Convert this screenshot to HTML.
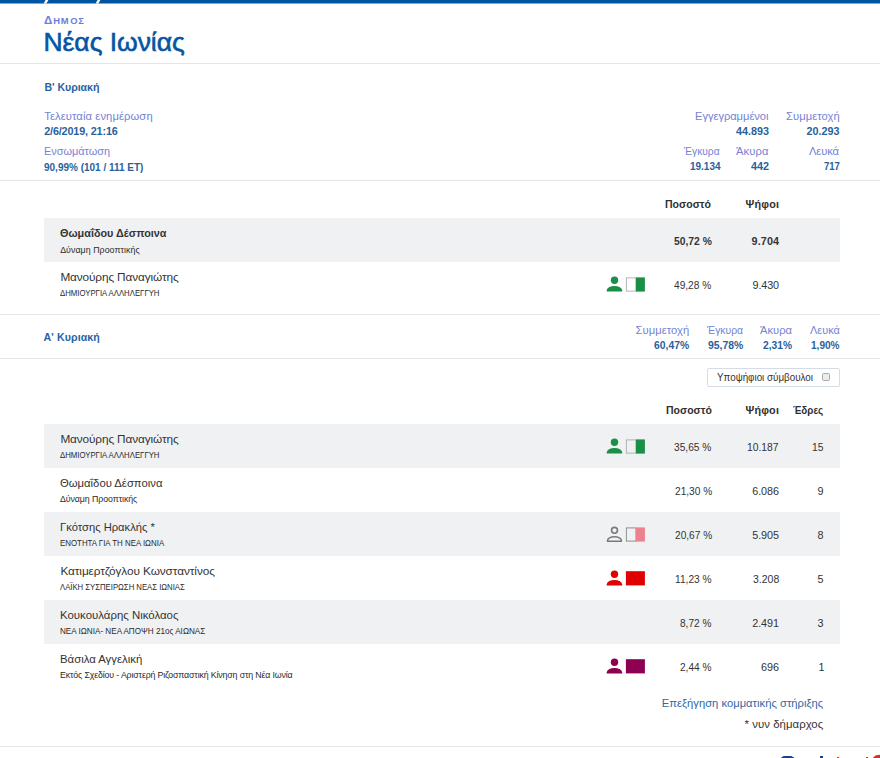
<!DOCTYPE html>
<html><head><meta charset="utf-8">
<style>
html,body{margin:0;padding:0;background:#fff;width:880px;height:758px;overflow:hidden;position:relative}
body{font-family:"Liberation Sans",sans-serif;}
.a{position:absolute;white-space:nowrap;line-height:1}
.hr{position:absolute;left:0;width:880px;height:1px;background:#e3e6ea}
.grey{position:absolute;left:44px;width:796px;height:44px;background:#f0f1f3}
.ic{position:absolute;overflow:visible}
</style></head><body>
<svg style="position:absolute;left:0;top:0" width="880" height="5">
<rect x="0" y="0" width="880" height="3.5" fill="#0055a2"/>
<polygon points="45.6,0 48.4,0 46.4,3.5 43.6,3.5" fill="#fff"/>
<polygon points="97.6,0 100.4,0 98.4,3.5 95.6,3.5" fill="#fff"/>
</svg>
<div class="hr" style="top:63px"></div>
<div class="hr" style="top:180px"></div>
<div class="hr" style="top:314px"></div>
<div class="hr" style="top:358px"></div>
<div class="hr" style="top:746px"></div>
<div class="grey" style="top:218px"></div>
<div class="grey" style="top:424px"></div>
<div class="grey" style="top:512px"></div>
<div class="grey" style="top:600px"></div>
<svg class="ic" style="left:600px;top:272px" width="50" height="26" viewBox="0 0 50 26"><circle cx="14.5" cy="8.2" r="3.7" fill="#1a8f47"/><path d="M6.7 19.6 L6.7 18.6 A7.75 4.7 0 0 1 22.2 18.6 L22.2 19.6 Z" fill="#1a8f47"/><rect x="26.4" y="5.9" width="9.6" height="13.2" fill="none" stroke="#b3b3b3" stroke-width="1"/><rect x="35.9" y="5.4" width="9.0" height="14.2" fill="#1a8f47"/></svg>
<svg class="ic" style="left:600px;top:434px" width="50" height="26" viewBox="0 0 50 26"><circle cx="14.5" cy="8.2" r="3.7" fill="#1a8f47"/><path d="M6.7 19.6 L6.7 18.6 A7.75 4.7 0 0 1 22.2 18.6 L22.2 19.6 Z" fill="#1a8f47"/><rect x="26.4" y="5.9" width="9.6" height="13.2" fill="none" stroke="#b3b3b3" stroke-width="1"/><rect x="35.9" y="5.4" width="9.0" height="14.2" fill="#1a8f47"/></svg>
<svg class="ic" style="left:600px;top:522px" width="50" height="26" viewBox="0 0 50 26"><circle cx="14.5" cy="8.3" r="2.95" fill="none" stroke="#7a7a7a" stroke-width="1.6"/><path d="M7.5 19.3 L7.5 18.7 A6.95 3.95 0 0 1 21.4 18.7 L21.4 19.3 Z" fill="none" stroke="#7a7a7a" stroke-width="1.6" stroke-linejoin="round"/><rect x="26.4" y="5.9" width="9.6" height="13.2" fill="none" stroke="#8f8f8f" stroke-width="1"/><rect x="35.9" y="5.4" width="9.0" height="14.2" fill="#ee8090"/></svg>
<svg class="ic" style="left:600px;top:566px" width="50" height="26" viewBox="0 0 50 26"><circle cx="14.5" cy="8.2" r="3.7" fill="#e00000"/><path d="M6.7 19.6 L6.7 18.6 A7.75 4.7 0 0 1 22.2 18.6 L22.2 19.6 Z" fill="#e00000"/><rect x="25.9" y="5.2" width="19.0" height="14.2" fill="#e00000"/></svg>
<svg class="ic" style="left:600px;top:654px" width="50" height="26" viewBox="0 0 50 26"><circle cx="14.5" cy="8.2" r="3.7" fill="#8e0052"/><path d="M6.7 19.6 L6.7 18.6 A7.75 4.7 0 0 1 22.2 18.6 L22.2 19.6 Z" fill="#8e0052"/><rect x="25.9" y="5.2" width="19.0" height="14.2" fill="#8e0052"/></svg>
<div style="position:absolute;left:707px;top:368px;width:133px;height:19px;box-sizing:border-box;border:1px solid #d5dce5;border-radius:2px"></div>
<div style="position:absolute;left:821.5px;top:373px;width:8px;height:8px;box-sizing:border-box;border:1px solid #a9a9a9;border-radius:1.5px;background:#ececec"></div>
<div class="a" style="left:44.00px;top:15px;font-size:11.5px;font-weight:700;color:#6a7ede;letter-spacing:0.000px">Δ</div>
<div class="a" style="left:53.25px;top:16px;font-size:9.4px;font-weight:700;color:#6a7ede;letter-spacing:0.000px">Η</div>
<div class="a" style="left:60.75px;top:16px;font-size:9.4px;font-weight:700;color:#6a7ede;letter-spacing:0.000px">Μ</div>
<div class="a" style="left:70.25px;top:16px;font-size:9.4px;font-weight:700;color:#6a7ede;letter-spacing:0.000px">Ο</div>
<div class="a" style="left:78.25px;top:16px;font-size:9.4px;font-weight:700;color:#6a7ede;letter-spacing:0.000px">Σ</div>
<div class="a" style="left:43.50px;top:29px;font-size:26.5px;font-weight:400;color:#0655a5;letter-spacing:-0.042px;-webkit-text-stroke:0.6px #0655a5">Νέας Ιωνίας</div>
<div class="a" style="left:44.40px;top:82px;font-size:10.6px;font-weight:700;color:#2862a2;letter-spacing:-0.038px">Β' Κυριακή</div>
<div class="a" style="left:44.20px;top:111px;font-size:11.2px;font-weight:400;color:#7483d6;letter-spacing:0.104px">Τελευταία ενημέρωση</div>
<div class="a" style="left:44.20px;top:126px;font-size:10.8px;font-weight:700;color:#2a5f9c;letter-spacing:-0.145px">2/6/2019, 21:16</div>
<div class="a" style="left:44.20px;top:146px;font-size:11.2px;font-weight:400;color:#7483d6;transform:scaleX(0.9762);transform-origin:0 0">Ενσωμάτωση</div>
<div class="a" style="left:44.20px;top:162px;font-size:10.8px;font-weight:700;color:#2a5f9c;transform:scaleX(0.9245);transform-origin:0 0">90,99% (101 / 111 ET)</div>
<div class="a" style="left:695.00px;top:111px;font-size:11.2px;font-weight:400;color:#7483d6;letter-spacing:-0.063px">Εγγεγραμμένοι</div>
<div class="a" style="left:736.10px;top:126px;font-size:10.8px;font-weight:700;color:#2a5f9c;letter-spacing:-0.024px">44.893</div>
<div class="a" style="left:786.00px;top:111px;font-size:11.2px;font-weight:400;color:#7483d6;letter-spacing:0.067px">Συμμετοχή</div>
<div class="a" style="left:806.60px;top:126px;font-size:10.8px;font-weight:700;color:#2a5f9c;letter-spacing:-0.024px">20.293</div>
<div class="a" style="left:683.91px;top:146px;font-size:11.2px;font-weight:400;color:#7483d6;transform:scaleX(0.9149);transform-origin:0 0">Έγκυρα</div>
<div class="a" style="left:689.50px;top:161px;font-size:10.8px;font-weight:700;color:#2a5f9c;transform:scaleX(0.9237);transform-origin:0 0">19.134</div>
<div class="a" style="left:736.00px;top:146px;font-size:11.2px;font-weight:400;color:#7483d6;letter-spacing:0.114px">Άκυρα</div>
<div class="a" style="left:751.00px;top:161px;font-size:10.8px;font-weight:700;color:#2a5f9c;letter-spacing:-0.005px">442</div>
<div class="a" style="left:809.00px;top:146px;font-size:11.2px;font-weight:400;color:#7483d6;letter-spacing:-0.134px">Λευκά</div>
<div class="a" style="left:823.60px;top:161px;font-size:10.8px;font-weight:700;color:#2a5f9c;transform:scaleX(0.8829);transform-origin:0 0">717</div>
<div class="a" style="left:665.40px;top:199px;font-size:10.8px;font-weight:700;color:#303030;transform:scaleX(0.9752);transform-origin:0 0">Ποσοστό</div>
<div class="a" style="left:745.60px;top:199px;font-size:10.8px;font-weight:700;color:#303030;letter-spacing:0.188px">Ψήφοι</div>
<div class="a" style="left:60.20px;top:228px;font-size:11.2px;font-weight:700;color:#353535;transform:scaleX(0.9694);transform-origin:0 0">Θωμαΐδου Δέσποινα</div>
<div class="a" style="left:60.20px;top:246px;font-size:8.8px;font-weight:400;color:#2a2a2a;letter-spacing:0.057px">Δύναμη Προοπτικής</div>
<div class="a" style="left:673.60px;top:236px;font-size:10.8px;font-weight:700;color:#353535;transform:scaleX(0.9546);transform-origin:0 0">50,72 %</div>
<div class="a" style="left:751.60px;top:236px;font-size:10.8px;font-weight:700;color:#353535;letter-spacing:0.097px">9.704</div>
<div class="a" style="left:60.40px;top:272px;font-size:11.8px;font-weight:400;color:#333333;letter-spacing:-0.119px">Μανούρης Παναγιώτης</div>
<div class="a" style="left:60.00px;top:289px;font-size:8.5px;font-weight:400;color:#2a2a2a;transform:scaleX(0.9146);transform-origin:0 0">ΔΗΜΙΟΥΡΓΙΑ ΑΛΛΗΛΕΓΓΥΗ</div>
<div class="a" style="left:674.20px;top:280px;font-size:10.8px;font-weight:400;color:#333333;transform:scaleX(0.9396);transform-origin:0 0">49,28 %</div>
<div class="a" style="left:752.50px;top:280px;font-size:10.8px;font-weight:400;color:#333333;letter-spacing:-0.128px">9.430</div>
<div class="a" style="left:43.60px;top:332px;font-size:10.6px;font-weight:700;color:#2862a2;letter-spacing:0.095px">Α' Κυριακή</div>
<div class="a" style="left:635.50px;top:325px;font-size:11.2px;font-weight:400;color:#7483d6;letter-spacing:0.067px">Συμμετοχή</div>
<div class="a" style="left:653.50px;top:340px;font-size:10.8px;font-weight:700;color:#2a5f9c;transform:scaleX(0.9590);transform-origin:0 0">60,47%</div>
<div class="a" style="left:706.93px;top:325px;font-size:11.2px;font-weight:400;color:#7483d6;transform:scaleX(0.9272);transform-origin:0 0">Έγκυρα</div>
<div class="a" style="left:707.80px;top:340px;font-size:10.8px;font-weight:700;color:#2a5f9c;transform:scaleX(0.9644);transform-origin:0 0">95,78%</div>
<div class="a" style="left:760.00px;top:325px;font-size:11.2px;font-weight:400;color:#7483d6;letter-spacing:0.014px">Άκυρα</div>
<div class="a" style="left:763.20px;top:340px;font-size:10.8px;font-weight:700;color:#2a5f9c;transform:scaleX(0.9480);transform-origin:0 0">2,31%</div>
<div class="a" style="left:809.50px;top:325px;font-size:11.2px;font-weight:400;color:#7483d6;transform:scaleX(0.9763);transform-origin:0 0">Λευκά</div>
<div class="a" style="left:810.90px;top:340px;font-size:10.8px;font-weight:700;color:#2a5f9c;transform:scaleX(0.9318);transform-origin:0 0">1,90%</div>
<div class="a" style="left:716.70px;top:373px;font-size:10.4px;font-weight:400;color:#333333;transform:scaleX(0.9445);transform-origin:0 0">Υποψήφιοι σύμβουλοι</div>
<div class="a" style="left:665.50px;top:405px;font-size:10.8px;font-weight:700;color:#303030;transform:scaleX(0.9731);transform-origin:0 0">Ποσοστό</div>
<div class="a" style="left:745.50px;top:405px;font-size:10.8px;font-weight:700;color:#303030;letter-spacing:0.188px">Ψήφοι</div>
<div class="a" style="left:792.70px;top:405px;font-size:10.8px;font-weight:700;color:#303030;transform:scaleX(0.9088);transform-origin:0 0">Έδρες</div>
<div class="a" style="left:60.40px;top:434px;font-size:11.8px;font-weight:400;color:#333333;letter-spacing:-0.119px">Μανούρης Παναγιώτης</div>
<div class="a" style="left:60.00px;top:451px;font-size:8.5px;font-weight:400;color:#2a2a2a;transform:scaleX(0.9146);transform-origin:0 0">ΔΗΜΙΟΥΡΓΙΑ ΑΛΛΗΛΕΓΓΥΗ</div>
<div class="a" style="left:674.30px;top:442px;font-size:10.8px;font-weight:400;color:#333333;transform:scaleX(0.9421);transform-origin:0 0">35,65 %</div>
<div class="a" style="left:747.30px;top:442px;font-size:10.8px;font-weight:400;color:#333333;transform:scaleX(0.9570);transform-origin:0 0">10.187</div>
<div class="a" style="left:811.80px;top:442px;font-size:10.8px;font-weight:400;color:#333333;transform:scaleX(0.9496);transform-origin:0 0">15</div>
<div class="a" style="left:60.40px;top:478px;font-size:11.8px;font-weight:400;color:#333333;transform:scaleX(0.9560);transform-origin:0 0">Θωμαΐδου Δέσποινα</div>
<div class="a" style="left:60.00px;top:495px;font-size:8.8px;font-weight:400;color:#2a2a2a;letter-spacing:-0.086px">Δύναμη Προοπτικής</div>
<div class="a" style="left:674.50px;top:486px;font-size:10.8px;font-weight:400;color:#333333;transform:scaleX(0.9371);transform-origin:0 0">21,30 %</div>
<div class="a" style="left:752.30px;top:486px;font-size:10.8px;font-weight:400;color:#333333;letter-spacing:-0.103px">6.086</div>
<div class="a" style="left:817.50px;top:486px;font-size:10.8px;font-weight:400;color:#333333;letter-spacing:0.000px">9</div>
<div class="a" style="left:60.40px;top:522px;font-size:11.8px;font-weight:400;color:#333333;transform:scaleX(0.9500);transform-origin:0 0">Γκότσης Ηρακλής *</div>
<div class="a" style="left:60.00px;top:539px;font-size:8.5px;font-weight:400;color:#2a2a2a;transform:scaleX(0.9276);transform-origin:0 0">ΕΝΟΤΗΤΑ ΓΙΑ ΤΗ ΝΕΑ ΙΩΝΙΑ</div>
<div class="a" style="left:674.50px;top:530px;font-size:10.8px;font-weight:400;color:#333333;transform:scaleX(0.9371);transform-origin:0 0">20,67 %</div>
<div class="a" style="left:752.30px;top:530px;font-size:10.8px;font-weight:400;color:#333333;letter-spacing:-0.103px">5.905</div>
<div class="a" style="left:817.50px;top:530px;font-size:10.8px;font-weight:400;color:#333333;letter-spacing:0.000px">8</div>
<div class="a" style="left:60.40px;top:566px;font-size:11.8px;font-weight:400;color:#333333;letter-spacing:-0.079px">Κατιμερτζόγλου Κωνσταντίνος</div>
<div class="a" style="left:60.00px;top:583px;font-size:8.5px;font-weight:400;color:#2a2a2a;transform:scaleX(0.9089);transform-origin:0 0">ΛΑΪΚΗ ΣΥΣΠΕΙΡΩΣΗ ΝΕΑΣ ΙΩΝΙΑΣ</div>
<div class="a" style="left:675.00px;top:574px;font-size:10.8px;font-weight:400;color:#333333;transform:scaleX(0.9435);transform-origin:0 0">11,23 %</div>
<div class="a" style="left:752.70px;top:574px;font-size:10.8px;font-weight:400;color:#333333;transform:scaleX(0.9699);transform-origin:0 0">3.208</div>
<div class="a" style="left:817.50px;top:574px;font-size:10.8px;font-weight:400;color:#333333;letter-spacing:0.000px">5</div>
<div class="a" style="left:60.40px;top:610px;font-size:11.8px;font-weight:400;color:#333333;transform:scaleX(0.9681);transform-origin:0 0">Κουκουλάρης Νικόλαος</div>
<div class="a" style="left:60.00px;top:627px;font-size:8.5px;font-weight:400;color:#2a2a2a;transform:scaleX(0.9557);transform-origin:0 0">ΝΕΑ ΙΩΝΙΑ- ΝΕΑ ΑΠΟΨΗ 21ος ΑΙΩΝΑΣ</div>
<div class="a" style="left:680.30px;top:618px;font-size:10.8px;font-weight:400;color:#333333;transform:scaleX(0.9320);transform-origin:0 0">8,72 %</div>
<div class="a" style="left:752.30px;top:618px;font-size:10.8px;font-weight:400;color:#333333;letter-spacing:-0.103px">2.491</div>
<div class="a" style="left:817.50px;top:618px;font-size:10.8px;font-weight:400;color:#333333;letter-spacing:0.000px">3</div>
<div class="a" style="left:60.40px;top:654px;font-size:11.8px;font-weight:400;color:#333333;transform:scaleX(0.9622);transform-origin:0 0">Βάσιλα Αγγελική</div>
<div class="a" style="left:60.00px;top:671px;font-size:8.8px;font-weight:400;color:#2a2a2a;letter-spacing:-0.144px">Εκτός Σχεδίου - Αριστερή Ριζοσπαστική Κίνηση στη Νέα Ιωνία</div>
<div class="a" style="left:680.30px;top:662px;font-size:10.8px;font-weight:400;color:#333333;transform:scaleX(0.9320);transform-origin:0 0">2,44 %</div>
<div class="a" style="left:760.90px;top:662px;font-size:10.8px;font-weight:400;color:#333333;letter-spacing:-0.005px">696</div>
<div class="a" style="left:818.50px;top:662px;font-size:10.8px;font-weight:400;color:#333333;letter-spacing:0.000px">1</div>
<div class="a" style="left:661.75px;top:698px;font-size:11.2px;font-weight:400;color:#2f6aa6;letter-spacing:0.024px">Επεξήγηση κομματικής στήριξης</div>
<div class="a" style="left:744.50px;top:719px;font-size:11.4px;font-weight:400;color:#333333;letter-spacing:0.043px">* νυν δήμαρχος</div>
<div style="position:absolute;left:780px;top:756px;width:15px;height:5px;box-sizing:border-box;border:2px solid #1b3f8a;border-radius:6px 6px 0 0;border-bottom:none"></div>
<div style="position:absolute;left:820px;top:755.5px;width:2.5px;height:4px;background:#1b3f8a"></div>
<div style="position:absolute;left:837px;top:756.5px;width:2px;height:2px;background:#d8322a"></div>
<div style="position:absolute;left:866px;top:756.5px;width:2px;height:2px;background:#d8322a"></div>
<svg style="position:absolute;left:870px;top:753px" width="10" height="5"><polygon points="2.5,5 6,2.3 10,1.8 10,5" fill="#d8322a"/></svg>
</body></html>
